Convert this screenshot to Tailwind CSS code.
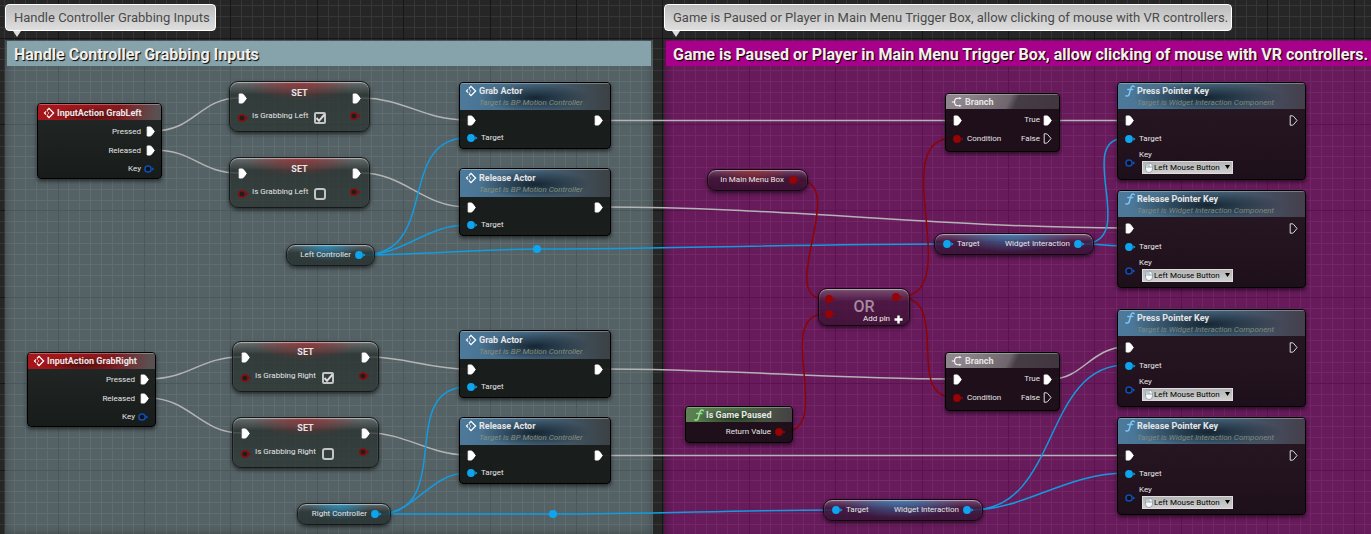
<!DOCTYPE html>
<html lang="en">
<head>
<meta charset="utf-8">
<meta name="viewport" content="width=device-width, initial-scale=1">
<title>Event Graph</title>
<script src="https://cdn.jsdelivr.net/npm/@tailwindcss/browser@4"></script>
</head>
<body class="bg-[#262626]">

<!-- Shared symbols: pins and node icons -->
<svg class="hidden" aria-hidden="true">
  <symbol id="exec" viewBox="0 0 9 11"><path d="M1.200 1H4c.8 0 1.300.4 1.800 1.100L8.300 5.500 5.800 8.900C5.300 9.600 4.800 10 4 10H1.200z" fill="#fff" stroke="#fff" stroke-linejoin="round"/></symbol>
  <symbol id="exec-open" viewBox="0 0 9 11"><path d="M1.200.8H3.200c.8 0 1.300.4 1.800 1.100L8 5.500 5 9.100c-.5.7-1 1.100-1.800 1.100h-2z" fill="none" stroke="#ddd" stroke-linejoin="round"/></symbol>
  <symbol id="pin" viewBox="0 0 11 8"><circle cx="4" cy="4" r="3.900" fill="currentColor"/><path d="M8.300 2.200 10.500 4 8.300 5.800z" fill="currentColor"/></symbol>
  <symbol id="pin-open" viewBox="0 0 11 8"><circle cx="4" cy="4" r="3.100" fill="#0a0a0a" fill-opacity=".6" stroke="currentColor" stroke-width="1.500"/><path d="M7.900 2.200 10.300 4 7.900 5.800z" fill="currentColor"/></symbol>
  <symbol id="event" viewBox="0 0 12 12"><path d="M3.900 3.500 6 1.400 10.600 6 6 10.600 3.900 8.500" fill="none" stroke="#fff" stroke-width="1.300"/><path d="M3.100 4.300 1.400 6l1.700 1.700" fill="none" stroke="#fff" stroke-width="1.100"/><path d="M4.200 4.300 6 6 4.200 7.700" fill="none" stroke="#fff" stroke-width=".8" stroke-opacity=".7"/></symbol>
  <symbol id="func" viewBox="0 0 10 12"><path d="M9.200 1.600C8.400.6 6.700.7 6.100 2.500L4.200 9.200C3.700 11 2.200 11.500.9 10.800M2.800 4.500h5" fill="none" stroke="currentColor" stroke-width="1.500" stroke-linecap="round"/></symbol>
  <symbol id="branch" viewBox="0 0 12 12"><path d="M.8 6h2.400M9 2.300H6.600C4.600 2.300 3.600 4 3.600 6s1 3.700 3 3.700H9" fill="none" stroke="#fff" stroke-width="1.100"/><path d="M8.400 1 10.600 2.300 8.400 3.600zM8.400 8.400 10.600 9.700 8.400 11z" fill="#fff"/></symbol>
  <symbol id="mouse" viewBox="0 0 8 11"><rect x=".5" y="1" width="7" height="9.500" rx="3.400" fill="#f4f8fb" stroke="#8c949a" stroke-width=".8"/><path d="M4 1v4M.6 5h6.800" stroke="#8c949a" stroke-width=".8"/><path d="M1 4.600C1 2.600 2 1.500 3.600 1.400v3.200z" fill="#a9cbe4"/></symbol>
</svg>

<main class="relative min-h-screen w-full overflow-hidden bg-[#262626] font-['Roboto','Liberation_Sans',sans-serif] text-[8px] leading-3 text-[#e6e6e6]">

  <!-- Canvas grid, filled in by the script at the end -->
  <svg class="absolute inset-0 h-full w-full" shape-rendering="crispEdges" aria-hidden="true">
    <path id="grid-minor" stroke="#363636"/>
    <path id="grid-major" stroke="#161616"/>
  </svg>

  <!-- Comment boxes -->
  <section class="absolute top-10 bottom-0 left-[5px] w-[648px] bg-[#afd4dd]/35 px-[2px] pt-px shadow-[inset_0_0_10px_rgba(0,0,0,0.3)]">
    <h2 class="h-[25px] truncate bg-[#86a3ab] px-[7px] text-base leading-[28px] font-bold text-[#f0f0f0] [text-shadow:1px_1px_1px_#000]">Handle Controller Grabbing Inputs</h2>
  </section>
  <section class="absolute top-10 right-0 bottom-0 left-[664px] bg-[#e20ac0]/35 pt-px pl-[2px] shadow-[inset_6px_0_8px_-4px_rgba(0,0,0,0.3)]">
    <h2 class="h-[25px] overflow-hidden bg-[#a9008b] pl-[7px] text-base leading-[28px] font-bold whitespace-nowrap text-[#f0f0f0] [text-shadow:1px_1px_1px_#000]">Game is Paused or Player in Main Menu Trigger Box, allow clicking of mouse with VR controllers.</h2>
  </section>

  <!-- Comment bubbles -->
  <div class="absolute top-1 left-[5px]">
    <p class="rounded border border-white bg-linear-to-b from-[#bcbcbc] to-[#dedede] pr-[5px] pl-2 text-[13px] leading-[25px] whitespace-nowrap text-[#4a4a4a]">Handle Controller Grabbing Inputs</p>
    <svg class="ml-2 h-[6px] w-2" viewBox="0 0 8 6" aria-hidden="true"><path d="M0 0h8L4 6z" fill="#ddd"/></svg>
  </div>
  <div class="absolute top-1 left-[664px]">
    <p class="rounded border border-white bg-linear-to-b from-[#bcbcbc] to-[#dedede] pr-[3px] pl-2 text-[13px] leading-[25px] whitespace-nowrap text-[#4a4a4a]">Game is Paused or Player in Main Menu Trigger Box, allow clicking of mouse with VR controllers.</p>
    <svg class="ml-2 h-[6px] w-2" viewBox="0 0 8 6" aria-hidden="true"><path d="M0 0h8L4 6z" fill="#ddd"/></svg>
  </div>

  <!-- Wires -->
  <svg class="absolute inset-0 h-full w-full" fill="none" stroke-width="1.500" aria-hidden="true">
    <g stroke="#b4b4b4">
      <path d="M154 131C194 131 200 98 239 98"/>
      <path d="M154 150C194 150 200 173 239 173"/>
      <path d="M361 98C405 98 422 120 467 120"/>
      <path d="M361 173C405 173 422 207 467 207"/>
      <path d="M603 120.500H953"/>
      <path d="M603 207C780 207 950 228 1126 228"/>
      <path d="M1052 120.500H1126"/>
      <path d="M148 379C190 379 200 357 241 357"/>
      <path d="M148 398C190 398 200 433 241 433"/>
      <path d="M369 357C405 357 430 369 467 369"/>
      <path d="M369 433C405 433 430 455 467 455"/>
      <path d="M603 369C730 369 830 379 953 379"/>
      <path d="M603 455.500H1126"/>
      <path d="M1052 379C1082 379 1092 347 1126 347"/>
    </g>
    <g stroke="#129bdf">
      <path d="M363 255C440 255 396 138 467 138"/>
      <path d="M363 255C405 255 425 225 467 225"/>
      <path d="M363 255C420 255 480 249 537 249C670 249 810 244 943 244"/>
      <path d="M379 514C456 514 396 387 467 387"/>
      <path d="M379 514C415 514 430 473 467 473"/>
      <path d="M379 514H553C650 514 740 510 833 510"/>
      <path d="M1082 244C1142 244 1072 138 1126 138"/>
      <path d="M1082 244C1097 244 1111 246 1126 246"/>
      <path d="M972 510C1060 510 1042 365 1126 365"/>
      <path d="M972 510C1024 510 1066 473 1126 473"/>
    </g>
    <g stroke="#8c0404">
      <path d="M797 180C852 180 774 299 825 299"/>
      <path d="M783 432C836 432 772 314 825 314"/>
      <path d="M899 297C968 297 884 138 953 138"/>
      <path d="M899 297C952 297 904 397 953 397"/>
    </g>
    <g fill="#0ea5f0"><circle cx="537" cy="249" r="4"/><circle cx="553" cy="514" r="4"/></g>
  </svg>

  <!-- Input events -->
  <article class="absolute top-[103px] left-[37px] w-[125px] overflow-hidden rounded border border-black bg-linear-to-b from-[#202524]/95 to-[#141817]/95 pb-px shadow-[0_2px_4px_rgba(0,0,0,0.6)]">
    <h3 class="flex h-4 items-center gap-[2px] bg-[radial-gradient(ellipse_40px_8px_at_42%_70%,rgba(50,10,12,0.7),transparent),linear-gradient(100deg,#a5161a_20%,#84191d_65%,#5a5052_95%)] pt-[2px] pl-[5px] text-[9px] font-bold text-[#e8e8e8] shadow-[inset_0_1px_0_rgba(255,255,255,0.3)]"><svg class="size-3"><use href="#event"/></svg>InputAction GrabLeft</h3>
    <ul class="pt-[2px] pr-[6px]">
      <li class="flex h-[19px] items-center justify-end gap-[5px]">Pressed<svg class="h-[11px] w-[9px]"><use href="#exec"/></svg></li>
      <li class="flex h-[19px] items-center justify-end gap-[5px]">Released<svg class="h-[11px] w-[9px]"><use href="#exec"/></svg></li>
      <li class="flex h-[17px] items-center justify-end gap-[3px]">Key<svg class="h-2 w-[11px] text-[#0d4fb4]"><use href="#pin-open"/></svg></li>
    </ul>
  </article>
  <article class="absolute top-[352px] left-[27px] w-[129px] overflow-hidden rounded border border-black bg-linear-to-b from-[#202524]/95 to-[#141817]/95 shadow-[0_2px_4px_rgba(0,0,0,0.6)]">
    <h3 class="flex h-4 items-center gap-[2px] bg-[radial-gradient(ellipse_40px_8px_at_42%_70%,rgba(50,10,12,0.7),transparent),linear-gradient(100deg,#a5161a_20%,#84191d_65%,#5a5052_95%)] pl-[5px] text-[9px] font-bold text-[#e8e8e8] shadow-[inset_0_1px_0_rgba(255,255,255,0.3)]"><svg class="size-3"><use href="#event"/></svg>InputAction GrabRight</h3>
    <ul class="pt-px pr-[6px]">
      <li class="flex h-[19px] items-center justify-end gap-[5px]">Pressed<svg class="h-[11px] w-[9px]"><use href="#exec"/></svg></li>
      <li class="flex h-[19px] items-center justify-end gap-[5px]">Released<svg class="h-[11px] w-[9px]"><use href="#exec"/></svg></li>
      <li class="flex h-[18px] items-center justify-end gap-[3px]">Key<svg class="h-2 w-[11px] text-[#0d4fb4]"><use href="#pin-open"/></svg></li>
    </ul>
  </article>

  <!-- Variable setters -->
  <article class="absolute top-[81px] left-[229px] w-[141px] rounded-[9px] border border-[#161a1a] bg-[radial-gradient(ellipse_55px_18px_at_50%_0,rgba(160,40,44,0.75),transparent),linear-gradient(to_bottom,rgba(110,112,112,0.7),rgba(38,46,44,0.75)_25%,rgba(42,52,49,0.75))] px-2 pb-[5px] shadow-[inset_0_1px_1px_rgba(255,255,255,0.5),0_2px_4px_rgba(0,0,0,0.6)]">
    <div class="flex h-[25px] items-end justify-between pb-[3px]"><svg class="h-[11px] w-[9px]"><use href="#exec"/></svg><h3 class="self-center text-[9px] font-bold">SET</h3><svg class="h-[11px] w-[9px]"><use href="#exec"/></svg></div>
    <div class="flex h-[19px] items-center gap-[3px]"><svg class="mt-[3px] h-2 w-[11px] text-[#8c0a0a]"><use href="#pin-open"/></svg><label for="left-on" class="mb-[2px]">Is Grabbing Left</label>
      <span class="relative ml-[3px] mt-[3px] size-3"><input id="left-on" type="checkbox" checked class="block size-3 appearance-none rounded-[2px] border-2 border-[#c4c4c4]"><svg class="pointer-events-none absolute inset-0 size-3" viewBox="0 0 12 12"><path d="M2.500 6 5 8.800 10.500 2.500" fill="none" stroke="#ddd" stroke-width="2"/></svg></span>
      <svg class="mb-px ml-auto h-2 w-[11px] text-[#8c0a0a]"><use href="#pin-open"/></svg></div>
  </article>
  <article class="absolute top-[157px] left-[229px] w-[141px] rounded-[9px] border border-[#161a1a] bg-[radial-gradient(ellipse_55px_18px_at_50%_0,rgba(160,40,44,0.75),transparent),linear-gradient(to_bottom,rgba(110,112,112,0.7),rgba(38,46,44,0.75)_25%,rgba(42,52,49,0.75))] px-2 pb-[5px] shadow-[inset_0_1px_1px_rgba(255,255,255,0.5),0_2px_4px_rgba(0,0,0,0.6)]">
    <div class="flex h-[25px] items-end justify-between pb-[4px]"><svg class="h-[11px] w-[9px]"><use href="#exec"/></svg><h3 class="self-center text-[9px] font-bold">SET</h3><svg class="h-[11px] w-[9px]"><use href="#exec"/></svg></div>
    <div class="flex h-[19px] items-center gap-[3px]"><svg class="mt-[3px] h-2 w-[11px] text-[#8c0a0a]"><use href="#pin-open"/></svg><label for="left-off" class="mb-[2px]">Is Grabbing Left</label>
      <input id="left-off" type="checkbox" class="mt-[3px] ml-[3px] block size-3 appearance-none rounded-[3px] border-2 border-[#c4c4c4]">
      <svg class="mb-px ml-auto h-2 w-[11px] text-[#8c0a0a]"><use href="#pin-open"/></svg></div>
  </article>
  <article class="absolute top-[341px] left-[232px] w-[147px] rounded-[9px] border border-[#161a1a] bg-[radial-gradient(ellipse_55px_18px_at_50%_0,rgba(160,40,44,0.75),transparent),linear-gradient(to_bottom,rgba(110,112,112,0.7),rgba(38,46,44,0.75)_25%,rgba(42,52,49,0.75))] px-2 pb-[5px] shadow-[inset_0_1px_1px_rgba(255,255,255,0.5),0_2px_4px_rgba(0,0,0,0.6)]">
    <div class="flex h-[25px] items-end justify-between pb-[4px]"><svg class="h-[11px] w-[9px]"><use href="#exec"/></svg><h3 class="mb-px self-center text-[9px] font-bold">SET</h3><svg class="h-[11px] w-[9px]"><use href="#exec"/></svg></div>
    <div class="flex h-[19px] items-center gap-[3px]"><svg class="mt-[3px] h-2 w-[11px] text-[#8c0a0a]"><use href="#pin-open"/></svg><label for="right-on" class="mb-[2px]">Is Grabbing Right</label>
      <span class="relative ml-[3px] mt-[3px] size-3"><input id="right-on" type="checkbox" checked class="block size-3 appearance-none rounded-[2px] border-2 border-[#c4c4c4]"><svg class="pointer-events-none absolute inset-0 size-3" viewBox="0 0 12 12"><path d="M2.500 6 5 8.800 10.500 2.500" fill="none" stroke="#ddd" stroke-width="2"/></svg></span>
      <svg class="mb-px ml-auto h-2 w-[11px] text-[#8c0a0a]"><use href="#pin-open"/></svg></div>
  </article>
  <article class="absolute top-[417px] left-[232px] w-[147px] rounded-[9px] border border-[#161a1a] bg-[radial-gradient(ellipse_55px_18px_at_50%_0,rgba(160,40,44,0.75),transparent),linear-gradient(to_bottom,rgba(110,112,112,0.7),rgba(38,46,44,0.75)_25%,rgba(42,52,49,0.75))] px-2 pb-[5px] shadow-[inset_0_1px_1px_rgba(255,255,255,0.5),0_2px_4px_rgba(0,0,0,0.6)]">
    <div class="flex h-[25px] items-end justify-between pb-[4px]"><svg class="h-[11px] w-[9px]"><use href="#exec"/></svg><h3 class="mb-px self-center text-[9px] font-bold">SET</h3><svg class="h-[11px] w-[9px]"><use href="#exec"/></svg></div>
    <div class="flex h-[19px] items-center gap-[3px]"><svg class="mt-[3px] h-2 w-[11px] text-[#8c0a0a]"><use href="#pin-open"/></svg><label for="right-off" class="mb-[2px]">Is Grabbing Right</label>
      <input id="right-off" type="checkbox" class="mt-[3px] ml-[3px] block size-3 appearance-none rounded-[3px] border-2 border-[#c4c4c4]">
      <svg class="mb-px ml-auto h-2 w-[11px] text-[#8c0a0a]"><use href="#pin-open"/></svg></div>
  </article>

  <!-- Controller variables -->
  <div class="absolute top-[244px] left-[286px] flex h-[22px] w-[89px] items-center justify-end gap-1 rounded-[9px] border border-[#161a1a] bg-[radial-gradient(ellipse_32px_16px_at_45%_0,rgba(40,150,200,0.8),transparent),linear-gradient(to_bottom,rgba(95,105,108,0.8),rgba(38,48,48,0.8)_40%,rgba(36,46,46,0.8))] pr-2 shadow-[inset_0_1px_1px_rgba(255,255,255,0.5),0_2px_4px_rgba(0,0,0,0.6)]">Left Controller<svg class="h-2 w-[11px] text-[#0ea5f0]"><use href="#pin"/></svg></div>
  <div class="absolute top-[503px] left-[297px] flex h-[22px] w-[94px] items-center justify-end gap-1 rounded-[9px] border border-[#161a1a] bg-[radial-gradient(ellipse_32px_16px_at_45%_0,rgba(40,150,200,0.8),transparent),linear-gradient(to_bottom,rgba(95,105,108,0.8),rgba(38,48,48,0.8)_40%,rgba(36,46,46,0.8))] pr-2 shadow-[inset_0_1px_1px_rgba(255,255,255,0.5),0_2px_4px_rgba(0,0,0,0.6)]">Right Controller<svg class="h-2 w-[11px] text-[#0ea5f0]"><use href="#pin"/></svg></div>

  <!-- Actor calls -->
  <article class="absolute top-[82px] left-[459px] w-[152px] overflow-hidden rounded border border-black bg-[#141817]/93 pb-px shadow-[0_2px_4px_rgba(0,0,0,0.6)]">
    <header class="flex h-[27px] gap-[2px] bg-[radial-gradient(ellipse_55px_14px_at_50%_55%,rgba(16,30,42,0.9),transparent),linear-gradient(to_right,#4d7a9c,#44647c_50%,#3c4144)] pt-[2px] pl-[5px] shadow-[inset_0_1px_0_rgba(255,255,255,0.3)]"><svg class="size-3"><use href="#event"/></svg><div><h3 class="text-[9px] font-bold">Grab Actor</h3><p class="text-[#84907c] italic">Target is BP Motion Controller</p></div></header>
    <div class="px-[7px] pt-px">
      <div class="flex h-[18px] items-center justify-between"><svg class="h-[11px] w-[9px]"><use href="#exec"/></svg><svg class="h-[11px] w-[9px]"><use href="#exec"/></svg></div>
      <div class="flex h-[18px] items-center gap-[3px]"><svg class="h-2 w-[11px] text-[#0ea5f0]"><use href="#pin"/></svg>Target</div>
    </div>
  </article>
  <article class="absolute top-[168px] left-[459px] w-[152px] overflow-hidden rounded border border-black bg-[#141817]/93 pb-px shadow-[0_2px_4px_rgba(0,0,0,0.6)]">
    <header class="flex h-[28px] gap-[2px] bg-[radial-gradient(ellipse_55px_14px_at_50%_55%,rgba(16,30,42,0.9),transparent),linear-gradient(to_right,#4d7a9c,#44647c_50%,#3c4144)] pt-[3px] pl-[5px] shadow-[inset_0_1px_0_rgba(255,255,255,0.3)]"><svg class="size-3"><use href="#event"/></svg><div><h3 class="text-[9px] font-bold">Release Actor</h3><p class="text-[#84907c] italic">Target is BP Motion Controller</p></div></header>
    <div class="px-[7px] pt-px">
      <div class="flex h-[18px] items-center justify-between"><svg class="h-[11px] w-[9px]"><use href="#exec"/></svg><svg class="h-[11px] w-[9px]"><use href="#exec"/></svg></div>
      <div class="flex h-[18px] items-center gap-[3px]"><svg class="h-2 w-[11px] text-[#0ea5f0]"><use href="#pin"/></svg>Target</div>
    </div>
  </article>
  <article class="absolute top-[330px] left-[459px] w-[152px] overflow-hidden rounded border border-black bg-[#141817]/93 pb-px shadow-[0_2px_4px_rgba(0,0,0,0.6)]">
    <header class="flex h-[28px] gap-[2px] bg-[radial-gradient(ellipse_55px_14px_at_50%_55%,rgba(16,30,42,0.9),transparent),linear-gradient(to_right,#4d7a9c,#44647c_50%,#3c4144)] pt-[3px] pl-[5px] shadow-[inset_0_1px_0_rgba(255,255,255,0.3)]"><svg class="size-3"><use href="#event"/></svg><div><h3 class="text-[9px] font-bold">Grab Actor</h3><p class="text-[#84907c] italic">Target is BP Motion Controller</p></div></header>
    <div class="px-[7px] pt-px">
      <div class="flex h-[18px] items-center justify-between"><svg class="h-[11px] w-[9px]"><use href="#exec"/></svg><svg class="h-[11px] w-[9px]"><use href="#exec"/></svg></div>
      <div class="flex h-[18px] items-center gap-[3px]"><svg class="h-2 w-[11px] text-[#0ea5f0]"><use href="#pin"/></svg>Target</div>
    </div>
  </article>
  <article class="absolute top-[417px] left-[459px] w-[152px] overflow-hidden rounded border border-black bg-[#141817]/93 pb-px shadow-[0_2px_4px_rgba(0,0,0,0.6)]">
    <header class="flex h-[27px] gap-[2px] bg-[radial-gradient(ellipse_55px_14px_at_50%_55%,rgba(16,30,42,0.9),transparent),linear-gradient(to_right,#4d7a9c,#44647c_50%,#3c4144)] pt-[2px] pl-[5px] shadow-[inset_0_1px_0_rgba(255,255,255,0.3)]"><svg class="size-3"><use href="#event"/></svg><div><h3 class="text-[9px] font-bold">Release Actor</h3><p class="text-[#84907c] italic">Target is BP Motion Controller</p></div></header>
    <div class="px-[7px] pt-px">
      <div class="flex h-[18px] items-center justify-between"><svg class="h-[11px] w-[9px]"><use href="#exec"/></svg><svg class="h-[11px] w-[9px]"><use href="#exec"/></svg></div>
      <div class="flex h-[18px] items-center gap-[3px]"><svg class="h-2 w-[11px] text-[#0ea5f0]"><use href="#pin"/></svg>Target</div>
    </div>
  </article>

  <!-- Conditions -->
  <div class="absolute top-[169px] left-[707px] flex h-[22px] w-[101px] items-center justify-end gap-[5px] rounded-[9px] border border-[#150812] bg-[radial-gradient(ellipse_38px_16px_at_45%_0,rgba(150,50,50,0.8),transparent),linear-gradient(to_bottom,rgba(120,80,112,0.8),rgba(58,20,50,0.8)_40%,rgba(48,16,42,0.8))] pr-[7px] shadow-[inset_0_1px_1px_rgba(255,255,255,0.5),0_2px_4px_rgba(0,0,0,0.6)]">In Main Menu Box<svg class="h-2 w-[11px] text-[#940404]"><use href="#pin"/></svg></div>

  <article class="absolute top-[406px] left-[685px] w-[108px] overflow-hidden rounded border border-black bg-[#1a0f17]/95 pb-px shadow-[0_2px_4px_rgba(0,0,0,0.6)]">
    <h3 class="flex h-[15px] items-center gap-[2px] bg-[radial-gradient(ellipse_40px_8px_at_45%_70%,rgba(24,40,22,0.8),transparent),linear-gradient(to_right,#5d8153,#4d6b47_50%,#453f44)] pl-2 text-[9px] font-bold shadow-[inset_0_1px_0_rgba(255,255,255,0.3)]"><svg class="h-3 w-[10px] text-[#8fe88a]"><use href="#func"/></svg>Is Game Paused</h3>
    <div class="flex h-[19px] items-center justify-end gap-1 pt-px pr-[6px]">Return Value<svg class="h-2 w-[11px] text-[#940404]"><use href="#pin"/></svg></div>
  </article>

  <article class="absolute top-[288px] left-[818px] flex h-[38px] w-[92px] justify-between rounded-[9px] border border-[#150812] bg-[linear-gradient(to_bottom,rgba(125,90,118,0.8),rgba(72,22,62,0.8)_35%,rgba(58,18,50,0.8))] px-[6px] shadow-[inset_0_1px_1px_rgba(255,255,255,0.5),0_2px_4px_rgba(0,0,0,0.6)]">
    <div class="flex flex-col gap-[7px] pt-[6px] text-[#940404]"><svg class="h-2 w-[11px]"><use href="#pin"/></svg><svg class="h-2 w-[11px]"><use href="#pin"/></svg></div>
    <h3 class="pt-[12px] text-base leading-[11px] font-medium text-[#a38b9f]">OR</h3>
    <svg class="mt-[4px] h-2 w-[11px] text-[#940404]"><use href="#pin"/></svg>
    <button class="absolute right-[6px] bottom-0 flex items-center gap-1 leading-3 text-[#f2f2f2]">Add pin<svg class="size-[9px]" viewBox="0 0 9 9"><path d="M4.500.5v8M.5 4.500h8" stroke="#fff" stroke-width="2.400"/></svg></button>
  </article>

  <article class="absolute top-[93px] left-[945px] w-[115px] overflow-hidden rounded border border-black bg-[#1a0f17]/95 pb-[3px] shadow-[0_2px_4px_rgba(0,0,0,0.6)]">
    <h3 class="flex h-[15px] items-center gap-[2px] bg-[linear-gradient(115deg,#8e858c_15%,#6e666c_55%,#463c44_62%,#41363f)] pt-px pl-[5px] text-[9px] font-bold shadow-[inset_0_1px_0_rgba(255,255,255,0.3)]"><svg class="size-3"><use href="#branch"/></svg>Branch</h3>
    <div class="px-[7px] pt-[2px]">
      <div class="flex h-[18px] items-center justify-between"><svg class="h-[11px] w-[9px]"><use href="#exec"/></svg><span class="flex items-center gap-[3px]">True<svg class="h-[11px] w-[9px]"><use href="#exec"/></svg></span></div>
      <div class="flex h-[19px] items-center justify-between"><span class="flex items-center gap-[3px]"><svg class="h-2 w-[11px] text-[#940404]"><use href="#pin"/></svg>Condition</span><span class="flex items-center gap-[3px]">False<svg class="h-[11px] w-[9px]"><use href="#exec-open"/></svg></span></div>
    </div>
  </article>
  <article class="absolute top-[352px] left-[945px] w-[115px] overflow-hidden rounded border border-black bg-[#1a0f17]/95 pb-[3px] shadow-[0_2px_4px_rgba(0,0,0,0.6)]">
    <h3 class="flex h-[15px] items-center gap-[2px] bg-[linear-gradient(115deg,#8e858c_15%,#6e666c_55%,#463c44_62%,#41363f)] pt-px pl-[5px] text-[9px] font-bold shadow-[inset_0_1px_0_rgba(255,255,255,0.3)]"><svg class="size-3"><use href="#branch"/></svg>Branch</h3>
    <div class="px-[7px] pt-[2px]">
      <div class="flex h-[18px] items-center justify-between"><svg class="h-[11px] w-[9px]"><use href="#exec"/></svg><span class="flex items-center gap-[3px]">True<svg class="h-[11px] w-[9px]"><use href="#exec"/></svg></span></div>
      <div class="flex h-[19px] items-center justify-between"><span class="flex items-center gap-[3px]"><svg class="h-2 w-[11px] text-[#940404]"><use href="#pin"/></svg>Condition</span><span class="flex items-center gap-[3px]">False<svg class="h-[11px] w-[9px]"><use href="#exec-open"/></svg></span></div>
    </div>
  </article>

  <!-- Widget interaction getters -->
  <div class="absolute top-[233px] left-[934px] flex h-[22px] w-[160px] items-center justify-between rounded-[9px] border border-[#150812] bg-[radial-gradient(ellipse_62px_18px_at_48%_0,rgba(60,130,180,0.85),transparent),linear-gradient(to_bottom,rgba(120,85,115,0.8),rgba(58,26,62,0.8)_40%,rgba(50,20,50,0.8))] px-2 shadow-[inset_0_1px_1px_rgba(255,255,255,0.5),0_2px_4px_rgba(0,0,0,0.6)]"><span class="flex items-center gap-[3px]"><svg class="h-2 w-[11px] text-[#0ea5f0]"><use href="#pin"/></svg>Target</span><span class="flex items-center gap-1">Widget Interaction<svg class="h-2 w-[11px] text-[#0ea5f0]"><use href="#pin"/></svg></span></div>
  <div class="absolute top-[499px] left-[823px] flex h-[22px] w-[160px] items-center justify-between rounded-[9px] border border-[#150812] bg-[radial-gradient(ellipse_62px_18px_at_48%_0,rgba(60,130,180,0.85),transparent),linear-gradient(to_bottom,rgba(120,85,115,0.8),rgba(58,26,62,0.8)_40%,rgba(50,20,50,0.8))] px-2 shadow-[inset_0_1px_1px_rgba(255,255,255,0.5),0_2px_4px_rgba(0,0,0,0.6)]"><span class="flex items-center gap-[3px]"><svg class="h-2 w-[11px] text-[#0ea5f0]"><use href="#pin"/></svg>Target</span><span class="flex items-center gap-1">Widget Interaction<svg class="h-2 w-[11px] text-[#0ea5f0]"><use href="#pin"/></svg></span></div>

  <!-- Pointer key calls -->
  <article class="absolute top-[82px] left-[1117px] w-[189px] overflow-hidden rounded border border-black bg-linear-to-b from-[#251820]/95 to-[#1a0f17]/95 pb-[5px] shadow-[0_2px_4px_rgba(0,0,0,0.6)]">
    <header class="flex h-[26px] gap-[2px] bg-[radial-gradient(ellipse_75px_14px_at_48%_55%,rgba(16,30,42,0.9),transparent),linear-gradient(to_right,#4d7a9c,#44647c_50%,#453f4c)] pt-[2px] pl-[7px] shadow-[inset_0_1px_0_rgba(255,255,255,0.3)]"><svg class="h-3 w-[10px] text-[#7cc4f5]"><use href="#func"/></svg><div><h3 class="text-[9px] font-bold">Press Pointer Key</h3><p class="text-[#7f8a7c] italic">Target is Widget Interaction Component</p></div></header>
    <div class="px-[7px] pt-[2px]">
      <div class="flex h-[18px] items-center justify-between"><svg class="h-[11px] w-[9px]"><use href="#exec"/></svg><svg class="h-[11px] w-[9px]"><use href="#exec-open"/></svg></div>
      <div class="flex h-[19px] items-center gap-[3px]"><svg class="h-2 w-[11px] text-[#0ea5f0]"><use href="#pin"/></svg>Target</div>
      <div class="flex items-center gap-[3px] pt-px"><svg class="mt-[2px] h-2 w-[11px] text-[#0d4fb4]"><use href="#pin-open"/></svg>
        <div><label for="key-1" class="block">Key</label><div class="relative ml-[3px] h-[13px] w-[91px]"><select id="key-1" class="block h-full w-full appearance-none border border-[#ddd] bg-linear-to-b from-[#b4b4b4] to-[#cfcfcf] pl-[11px] text-black"><option>Left Mouse Button</option></select><svg class="pointer-events-none absolute top-px left-[3px] h-[11px] w-2"><use href="#mouse"/></svg><svg class="pointer-events-none absolute top-1 right-[3px] h-1 w-[5px]" viewBox="0 0 5 4"><path d="M0 0h5L2.500 4z"/></svg></div></div></div>
    </div>
  </article>
  <article class="absolute top-[190px] left-[1117px] w-[189px] overflow-hidden rounded border border-black bg-linear-to-b from-[#251820]/95 to-[#1a0f17]/95 pb-[5px] shadow-[0_2px_4px_rgba(0,0,0,0.6)]">
    <header class="flex h-[26px] gap-[2px] bg-[radial-gradient(ellipse_75px_14px_at_48%_55%,rgba(16,30,42,0.9),transparent),linear-gradient(to_right,#4d7a9c,#44647c_50%,#453f4c)] pt-[2px] pl-[7px] shadow-[inset_0_1px_0_rgba(255,255,255,0.3)]"><svg class="h-3 w-[10px] text-[#7cc4f5]"><use href="#func"/></svg><div><h3 class="text-[9px] font-bold">Release Pointer Key</h3><p class="text-[#7f8a7c] italic">Target is Widget Interaction Component</p></div></header>
    <div class="px-[7px] pt-[2px]">
      <div class="flex h-[18px] items-center justify-between"><svg class="h-[11px] w-[9px]"><use href="#exec"/></svg><svg class="h-[11px] w-[9px]"><use href="#exec-open"/></svg></div>
      <div class="flex h-[19px] items-center gap-[3px]"><svg class="h-2 w-[11px] text-[#0ea5f0]"><use href="#pin"/></svg>Target</div>
      <div class="flex items-center gap-[3px] pt-px"><svg class="mt-[2px] h-2 w-[11px] text-[#0d4fb4]"><use href="#pin-open"/></svg>
        <div><label for="key-2" class="block">Key</label><div class="relative ml-[3px] h-[13px] w-[91px]"><select id="key-2" class="block h-full w-full appearance-none border border-[#ddd] bg-linear-to-b from-[#b4b4b4] to-[#cfcfcf] pl-[11px] text-black"><option>Left Mouse Button</option></select><svg class="pointer-events-none absolute top-px left-[3px] h-[11px] w-2"><use href="#mouse"/></svg><svg class="pointer-events-none absolute top-1 right-[3px] h-1 w-[5px]" viewBox="0 0 5 4"><path d="M0 0h5L2.500 4z"/></svg></div></div></div>
    </div>
  </article>
  <article class="absolute top-[309px] left-[1117px] w-[189px] overflow-hidden rounded border border-black bg-linear-to-b from-[#251820]/95 to-[#1a0f17]/95 pb-[5px] shadow-[0_2px_4px_rgba(0,0,0,0.6)]">
    <header class="flex h-[26px] gap-[2px] bg-[radial-gradient(ellipse_75px_14px_at_48%_55%,rgba(16,30,42,0.9),transparent),linear-gradient(to_right,#4d7a9c,#44647c_50%,#453f4c)] pt-[2px] pl-[7px] shadow-[inset_0_1px_0_rgba(255,255,255,0.3)]"><svg class="h-3 w-[10px] text-[#7cc4f5]"><use href="#func"/></svg><div><h3 class="text-[9px] font-bold">Press Pointer Key</h3><p class="text-[#7f8a7c] italic">Target is Widget Interaction Component</p></div></header>
    <div class="px-[7px] pt-[2px]">
      <div class="flex h-[18px] items-center justify-between"><svg class="h-[11px] w-[9px]"><use href="#exec"/></svg><svg class="h-[11px] w-[9px]"><use href="#exec-open"/></svg></div>
      <div class="flex h-[19px] items-center gap-[3px]"><svg class="h-2 w-[11px] text-[#0ea5f0]"><use href="#pin"/></svg>Target</div>
      <div class="flex items-center gap-[3px] pt-px"><svg class="mt-[2px] h-2 w-[11px] text-[#0d4fb4]"><use href="#pin-open"/></svg>
        <div><label for="key-3" class="block">Key</label><div class="relative ml-[3px] h-[13px] w-[91px]"><select id="key-3" class="block h-full w-full appearance-none border border-[#ddd] bg-linear-to-b from-[#b4b4b4] to-[#cfcfcf] pl-[11px] text-black"><option>Left Mouse Button</option></select><svg class="pointer-events-none absolute top-px left-[3px] h-[11px] w-2"><use href="#mouse"/></svg><svg class="pointer-events-none absolute top-1 right-[3px] h-1 w-[5px]" viewBox="0 0 5 4"><path d="M0 0h5L2.500 4z"/></svg></div></div></div>
    </div>
  </article>
  <article class="absolute top-[417px] left-[1117px] w-[189px] overflow-hidden rounded border border-black bg-linear-to-b from-[#251820]/95 to-[#1a0f17]/95 pb-[5px] shadow-[0_2px_4px_rgba(0,0,0,0.6)]">
    <header class="flex h-[26px] gap-[2px] bg-[radial-gradient(ellipse_75px_14px_at_48%_55%,rgba(16,30,42,0.9),transparent),linear-gradient(to_right,#4d7a9c,#44647c_50%,#453f4c)] pt-[2px] pl-[7px] shadow-[inset_0_1px_0_rgba(255,255,255,0.3)]"><svg class="h-3 w-[10px] text-[#7cc4f5]"><use href="#func"/></svg><div><h3 class="text-[9px] font-bold">Release Pointer Key</h3><p class="text-[#7f8a7c] italic">Target is Widget Interaction Component</p></div></header>
    <div class="px-[7px] pt-[2px]">
      <div class="flex h-[18px] items-center justify-between"><svg class="h-[11px] w-[9px]"><use href="#exec"/></svg><svg class="h-[11px] w-[9px]"><use href="#exec-open"/></svg></div>
      <div class="flex h-[19px] items-center gap-[3px]"><svg class="h-2 w-[11px] text-[#0ea5f0]"><use href="#pin"/></svg>Target</div>
      <div class="flex items-center gap-[3px] pt-px"><svg class="mt-[2px] h-2 w-[11px] text-[#0d4fb4]"><use href="#pin-open"/></svg>
        <div><label for="key-4" class="block">Key</label><div class="relative ml-[3px] h-[13px] w-[91px]"><select id="key-4" class="block h-full w-full appearance-none border border-[#ddd] bg-linear-to-b from-[#b4b4b4] to-[#cfcfcf] pl-[11px] text-black"><option>Left Mouse Button</option></select><svg class="pointer-events-none absolute top-px left-[3px] h-[11px] w-2"><use href="#mouse"/></svg><svg class="pointer-events-none absolute top-1 right-[3px] h-1 w-[5px]" viewBox="0 0 5 4"><path d="M0 0h5L2.500 4z"/></svg></div></div></div>
    </div>
  </article>
</main>

<script>
  // Eight minor cells per major cell; each line snaps to a whole pixel.
  const major = 86.4, originX = 58, originY = 38;
  function drawGrid() {
    const w = Math.max(innerWidth, 1), h = Math.max(innerHeight, 1);
    const paths = { minor: '', major: '' };
    for (let i = -8; originX + i * major / 8 < w; i++) {
      const x = Math.floor(originX + i * major / 8) + 0.5;
      paths[i % 8 ? 'minor' : 'major'] += `M${x} 0V${h}`;
    }
    for (let i = -8; originY + i * major / 8 < h; i++) {
      const y = Math.floor(originY + i * major / 8) + 0.5;
      paths[i % 8 ? 'minor' : 'major'] += `M0 ${y}H${w}`;
    }
    document.getElementById('grid-minor').setAttribute('d', paths.minor);
    document.getElementById('grid-major').setAttribute('d', paths.major);
  }
  drawGrid();
  addEventListener('resize', drawGrid);
</script>
</body>
</html>
